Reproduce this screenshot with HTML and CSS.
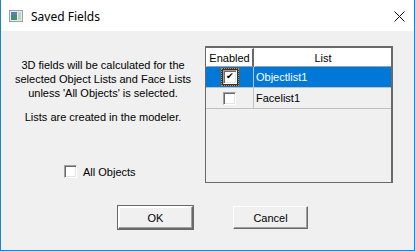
FILE: index.html
```html
<!DOCTYPE html>
<html lang="en">
<head>
	<meta charset="utf-8">
	<title>Saved Fields</title>
	<link rel="stylesheet" href="styles.css">
</head>
<body>
	<div class="window">
		<div class="titlebar">
			<svg class="app_icon" width="14" height="12" viewBox="0 0 14 12">
				<rect x="0.5" y="0.5" width="13" height="11" fill="#e8ece8" stroke="#9aa29a" />
				<rect x="2" y="2" width="6" height="8" fill="#3f8f7a" />
				<rect x="2" y="2" width="6" height="3" fill="#5a7fb8" />
				<rect x="9" y="2" width="3" height="8" fill="#c8d0c8" />
			</svg>
			<span class="title">Saved Fields</span>
			<svg class="close" width="11" height="11" viewBox="0 0 11 11">
				<path d="M0.5 0.5 L10.5 10.5 M10.5 0.5 L0.5 10.5" stroke="#111" stroke-width="1" fill="none" />
			</svg>
		</div>
		<div class="body">
			<div class="content">
				<div class="left">
					<p class="info">3D fields will be calculated for the<br>selected Object Lists and Face Lists<br>unless 'All Objects' is selected.</p>
					<p class="info note">Lists are created in the modeler.</p>
					<label class="all_objects">
						<span class="check"></span>
						All Objects
					</label>
				</div>
				<div class="listbox">
					<div class="row header">
						<div class="cell col_enabled">Enabled</div>
						<div class="cell col_list">List</div>
					</div>
					<div class="row selected">
						<div class="cell col_enabled">
							<span class="focus"><span class="check checked">&#10004;</span></span>
						</div>
						<div class="cell col_list">Objectlist1</div>
					</div>
					<div class="row">
						<div class="cell col_enabled"><span class="check"></span></div>
						<div class="cell col_list">Facelist1</div>
					</div>
				</div>
			</div>
			<div class="buttons">
				<button class="btn default">OK</button>
				<button class="btn">Cancel</button>
			</div>
		</div>
	</div>
</body>
</html>
```
FILE: styles.css
```css
html, body {
	margin: 0;
	padding: 0;
}
body {
	font-family: "Liberation Sans", Arial, sans-serif;
	font-size: 11px;
	color: #000;
	background: #fff;
}
.window {
	width: 415px;
	height: 251px;
	box-sizing: border-box;
	border: 1px solid #1883d7;
	border-top: none;
	background: #f0f0f0;
	display: flex;
	flex-direction: column;
}
.titlebar {
	height: 31px;
	background: #fff;
	display: flex;
	align-items: center;
	padding-left: 8px;
	padding-right: 9px;
}
.app_icon {
	margin-right: 8px;
	margin-top: 1px;
}
.title {
	font-family: "Noto Sans", "Open Sans", sans-serif;
	font-size: 12px;
	flex: 1;
	margin-top: 1px;
}
.close {
	margin-top: 1px;
}
.body {
	flex: 1;
	display: flex;
	flex-direction: column;
}
.content {
	display: flex;
	padding-top: 15px;
}
.left {
	width: 204px;
	display: flex;
	flex-direction: column;
}
.info {
	margin: 0;
	text-align: center;
	line-height: 14px;
}
.info:first-child {
	margin-top: 12px;
}
.note {
	margin-top: 10px;
}
.all_objects {
	display: flex;
	align-items: center;
	margin-top: 41px;
	margin-left: 63px;
	gap: 6px;
}
.check {
	display: inline-block;
	width: 13px;
	height: 13px;
	box-sizing: border-box;
	background: #fff;
	border-top: 1px solid #a0a0a0;
	border-left: 1px solid #a0a0a0;
	border-right: 1px solid #fff;
	border-bottom: 1px solid #fff;
	box-shadow: inset 1px 1px 0 #696969, inset -1px -1px 0 #e3e3e3;
	font-size: 9px;
	line-height: 11px;
	text-align: center;
	color: #000;
}
.listbox {
	width: 188px;
	height: 137px;
	box-sizing: border-box;
	border: 2px solid #696969;
	border-bottom-width: 1px;
	border-left-width: 1px;
	background: #f0f0f0;
}
.row {
	display: flex;
	height: 20px;
	border-bottom: 1px solid #c0c0c0;
	background: #f0f0f0;
}
.row .cell {
	display: flex;
	align-items: center;
	box-sizing: border-box;
}
.col_enabled {
	width: 48px;
	justify-content: center;
	border-right: 1px solid #c0c0c0;
}
.col_list {
	flex: 1;
	padding-left: 2px;
}
.header {
	height: 19px;
	border-bottom: none;
}
.header .cell {
	background: #fff;
	justify-content: center;
	border-top: 1px solid #fff;
	border-left: 1px solid #fff;
	border-right: 2px solid #696969;
	border-bottom: 1px solid #a0a0a0;
	padding-left: 0;
}
.header .col_list {
	border-right: none;
}
.selected {
	background: #0078d7;
	color: #fff;
}
.focus {
	display: inline-flex;
	padding: 1px;
	border: 1px dotted #ff8a00;
	background: #333;
}
.focus .check {
	width: 14px;
	height: 14px;
}
.buttons {
	display: flex;
	gap: 40px;
	margin-top: 23px;
	padding-left: 117px;
}
.btn {
	width: 75px;
	height: 23px;
	font-family: "Liberation Sans", Arial, sans-serif;
	font-size: 11px;
	background: #f0f0f0;
	border: none;
	border-top: 1px solid #fff;
	border-left: 1px solid #fff;
	border-right: 1px solid #696969;
	border-bottom: 1px solid #696969;
	box-shadow: inset -1px -1px 0 #a0a0a0;
	color: #000;
	padding: 0;
}
.btn.default {
	outline: 1px solid #696969;
	box-shadow: inset -1px -1px 0 #a0a0a0, inset 1px 1px 0 #fff;
}
```
